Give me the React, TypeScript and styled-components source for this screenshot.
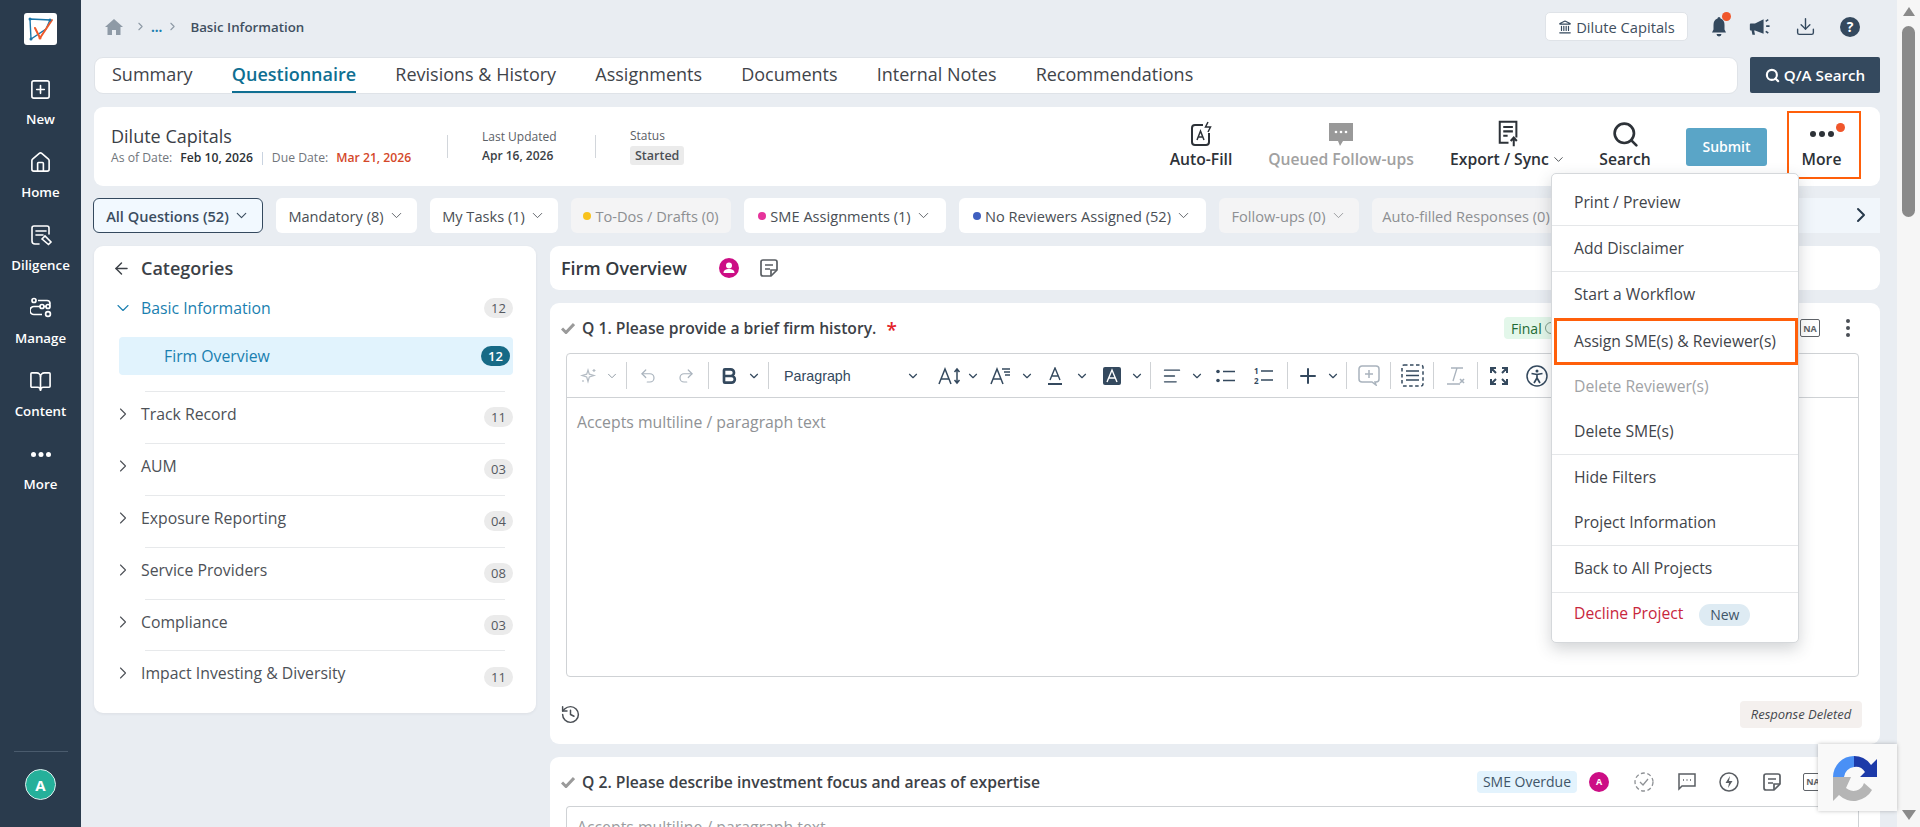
import React from "react";
import styled, { createGlobalStyle } from "styled-components";
import {
  SquarePlus, Home, BookOpen, ChevronRight, ChevronDown, ArrowLeft, Landmark, Download, Undo2, Redo2,
  Search as SearchIcon, History, Plus, AlignLeft, Bold,
} from "lucide-react";

const Global = createGlobalStyle`
  html, body { margin: 0; padding: 0; height: 100%; overflow: hidden; }
  body { font-family: "Open Sans", "Liberation Sans", sans-serif; color: #3a3f45; background: #e9edf2; }
  #root { height: 100%; }
  * { box-sizing: border-box; }
`;

const Page = styled.div`display: flex; width: 1920px; height: 827px; overflow: hidden; background: #e9edf2;`;

const Rail = styled.aside`
  width: 81px; flex: none; background: #2a3b4d; display: flex; flex-direction: column; align-items: center; padding-top: 13px;
`;
const LogoBox = styled.div`width: 33px; height: 32px; background: #fff; border-radius: 3px; display: flex; align-items: center; justify-content: center; margin-bottom: 23px;`;
const RailItem = styled.div`
  height: 73px; width: 100%; display: flex; flex-direction: column; align-items: center; justify-content: flex-start; padding-top: 9px; gap: 9px; color: #fff;
  font-size: 13.3px; font-weight: 600; line-height: 18px;
`;
const RailIcon = styled.div`height: 24px; display: flex; align-items: center; justify-content: center;`;
const RailFoot = styled.div`margin-top: auto; width: 100%; padding: 0 0 27px; display: flex; flex-direction: column; align-items: center;`;
const RailRule = styled.div`width: 54px; height: 1px; background: #4a5b6d; margin-bottom: 17px;`;
const RailAvatar = styled.div`
  width: 31px; height: 31px; border-radius: 50%; background: #25b09a; border: 1px solid #dfeeee; color: #fff; display: flex; align-items: center; justify-content: center; font-size: 15px; font-weight: 700;
`;

const Main = styled.main`flex: 1; min-width: 0; padding: 0 17px 0 13px; display: flex; flex-direction: column; overflow: hidden;`;
const Top = styled.div`height: 57px; display: flex; align-items: center; padding: 0 0 3px 0;`;
const Crumbs = styled.div`display: flex; align-items: center; font-size: 13.3px; font-weight: 600; color: #3f4f60; padding-left: 11px; margin-top: -1px;`;
const CrumbDots = styled.span`color: #1a7fb0; margin: 0 4px; font-weight: 700;`;
const CrumbLabel = styled.span`margin-left: 11px;`;
const TopRight = styled.div`margin-left: auto; display: flex; align-items: center; padding-right: 18px; margin-top: -1px;`;
const Firm = styled.div`
  height: 29px; width: 143px; background: #fff; border: 1px solid #dfe3e8; border-radius: 5px; display: flex; align-items: center; justify-content: center; gap: 4px;
  font-size: 14.7px; color: #3f4f60; font-weight: 400; margin-right: 19px; white-space: nowrap;
`;
const TopIcon = styled.div`position: relative; width: 24px; height: 24px; display: flex; align-items: center; justify-content: center;`;
const TopGap = styled.div<{ $w: number }>`width: ${(p) => p.$w}px;`;
const Dot = styled.span`position: absolute; top: -3px; right: 0; width: 9px; height: 9px; border-radius: 50%; background: #f0562b;`;
const MoreDot = styled(Dot)`top: 16px; right: 16px;`;

const TabRow = styled.div`display: flex; gap: 12px; height: 37px; margin-bottom: 13px;`;
const Tabs = styled.nav`
  flex: 1; background: #fff; border: 1px solid #dfe3e8; border-radius: 9px; display: flex; gap: 39.2px; padding-left: 17px; font-size: 18px; color: #3f444a;
`;
const Tab = styled.div<{ $on?: boolean }>`
  height: 100%; display: flex; align-items: center; padding-bottom: 1px; font-weight: ${(p) => (p.$on ? 600 : 400)}; color: ${(p) => (p.$on ? "#0f6f92" : "#3f444a")};
  border-bottom: ${(p) => (p.$on ? "2px solid #0f6f92" : "2px solid transparent")};
`;
const QaBtn = styled.button`
  width: 130px; height: 36px; background: #34495e; border: 0; border-radius: 2px; color: #fff; font: 600 15.2px "Open Sans", sans-serif; display: flex; align-items: center; justify-content: center; gap: 4px;
`;

const HeadCard = styled.section`
  height: 79px; background: #fff; border-radius: 9px; display: flex; align-items: center; padding: 0 19px 0 17px; margin-bottom: 12px;
`;
const Info = styled.div`width: 336px; display: flex; flex-direction: column;`;
const FirmName = styled.div`font-size: 18px; line-height: 24px; color: #3b4046; margin: -4px 0 2px;`;
const DateLine = styled.div`display: flex; align-items: center; font-size: 12.2px; line-height: 16px; color: #70757b;`;
const DateVal = styled.b<{ $red?: boolean }>`font-weight: 600; margin-left: 8px; color: ${(p) => (p.$red ? "#d4482a" : "#2c3136")};`;
const DateSep = styled.span`width: 1px; height: 13px; background: #c9d3e0; margin: 2px 9px 0;`;
const VSep = styled.div`width: 1px; height: 23px; background: #d2d6db; margin-right: 34px;`;
const Meta = styled.div`width: 113px; font-size: 12px; color: #5b6066; line-height: 16px;`;
const MetaVal = styled.div`font-weight: 600; color: #3a3f45; margin-top: 3px;`;
const StatusChip = styled.span`display: inline-block; margin-top: 2px; background: #ebebeb; border-radius: 3px; padding: 0 5px; font-weight: 600; font-size: 12.5px; color: #4b5056; line-height: 19px;`;
const Actions = styled.div`margin-left: auto; display: flex; align-items: center; height: 100%;`;
const Action = styled.div<{ $w: number; $off?: boolean; $nudge?: number }>`
  position: relative; width: ${(p) => p.$w}px; height: 100%; display: flex; flex-direction: column; align-items: center; justify-content: flex-start; padding: 14px ${(p) => p.$nudge ?? 0}px 0 0;
  font-size: 15.7px; line-height: 19px; font-weight: 600; color: ${(p) => (p.$off ? "#a1a1a1" : "#2d3238")}; white-space: nowrap;
`;
const ActIcon = styled.div`height: 26px; margin-bottom: 3px; display: flex; align-items: center; justify-content: center;`;
const Submit = styled.button`
  width: 81px; height: 38px; background: #5aa5c7; border: 0; border-radius: 3px; color: #fff; font: 600 14px "Open Sans", sans-serif; margin: 0 20px 0 21px;
`;
const MoreFrame = styled.div`
  position: absolute; top: 4px; left: 0; right: 0; bottom: 7px; border: 2px solid #ff5f0a;
`;
const ExportLabel = styled.div`display: flex; align-items: center; gap: 2px;`;

const FilterRow = styled.div`height: 35px; margin-left: -1px; display: flex; gap: 13px; margin-bottom: 13px; overflow: hidden; position: relative; background: linear-gradient(90deg, transparent 95%, #f1f6fb 95%);`;
const Pill = styled.div<{ $w: number; $active?: boolean; $off?: boolean }>`
  flex: none; width: ${(p) => p.$w}px; height: 35px; border-radius: 6px; display: flex; align-items: center; justify-content: center; gap: 4px; font-size: 14.6px; white-space: nowrap;
  background: ${(p) => (p.$active ? "#f2f9ff" : p.$off ? "#f4f4f5" : "#fff")};
  border: ${(p) => (p.$active ? "1px solid #34495e" : "0")};
  color: ${(p) => (p.$active ? "#3b4d5f" : p.$off ? "#8d8f92" : "#4a4f55")};
  font-weight: ${(p) => (p.$active ? 600 : 400)};
`;
const PillDot = styled.span<{ $c: string }>`width: 8px; height: 8px; border-radius: 50%; background: ${(p) => p.$c};`;
const FilterNext = styled.div`position: absolute; right: 7px; top: 5px; color: #27394b;`;

const Body = styled.div`flex: 1; min-height: 0; display: flex; gap: 14px;`;
const CatCard = styled.section`
  width: 442px; height: 467px; flex: none; background: #fff; border-radius: 9px; padding: 10px 23px 0 18px; box-shadow: 0 1px 3px rgba(60,70,80,.08);
`;
const CatTitle = styled.div`display: flex; align-items: center; gap: 10px; font-size: 18px; font-weight: 600; color: #3c4147; height: 24px; margin-bottom: 16px;`;
const CatHead = styled.div<{ $on?: boolean }>`
  display: flex; align-items: center; height: ${(p) => (p.$on ? "24px" : "50.9px")}; font-size: 15.8px; color: ${(p) => (p.$on ? "#1a7fb0" : "#4d5157")};
  padding-left: 1px;
  svg { flex: none; margin-bottom: ${(p) => (p.$on ? "0" : "7px")}; }
`;
const CatRule = styled.div`height: 1px; background: #e7e9eb; margin-left: 33px; margin-right: 8px;`;
const CatLabel = styled.span<{ $on?: boolean }>`margin-left: 8px; flex: 1; margin-bottom: ${(p) => (p.$on ? "0" : "7px")};`;
const Count = styled.span<{ $dark?: boolean }>`
  width: 29px; height: 20px; border-radius: 10px; display: flex; align-items: center; justify-content: center; font-size: 13px;
  background: ${(p) => (p.$dark ? "#166a86" : "#ebebeb")}; color: ${(p) => (p.$dark ? "#fff" : "#55595f")}; font-weight: ${(p) => (p.$dark ? 600 : 400)};
`;
const SubItem = styled.div`
  height: 38px; margin: 17px 0 16px 7px; padding: 0 3px 0 45px; background: #e1f3fd; border-radius: 4px; display: flex; align-items: center; justify-content: space-between; font-size: 15.8px; color: #1a7fb0;
`;

const Column = styled.div`flex: 1; min-width: 0; display: flex; flex-direction: column; gap: 13px;`;
const SecCard = styled.section`
  height: 44px; flex: none; background: #fff; border-radius: 9px; display: flex; align-items: center; padding-left: 11px; font-size: 18px; font-weight: 600; color: #343a40;
`;
const SecIcons = styled.div`display: flex; align-items: center; gap: 20px; margin-left: 32px;`;
const QCard = styled.article<{ $h: number }>`
  flex: none; height: ${(p) => p.$h}px; background: #fff; border-radius: 9px; padding: 0 21px 0 16px; display: flex; flex-direction: column;
`;
const QHead = styled.div<{ $h: number }>`flex: none; height: ${(p) => p.$h}px; margin-left: -5px; display: flex; align-items: center; font-size: 15.7px; font-weight: 600; color: #3c4147; white-space: nowrap;`;
const QTitle = styled.span`margin-left: 7px;`;
const Star = styled.span`color: #e3242b; font-size: 19px; margin-left: 10px; line-height: 14px; margin-top: 3px;`;
const QRight = styled.div`margin-left: auto; display: flex; align-items: center;`;
const FinalChip = styled.span`height: 22px; padding: 0 7px; gap: 3px; background: #e3f7ea; color: #1e6b35; border-radius: 4px; font-size: 14px; font-weight: 400; display: flex; align-items: center; width: 70px; margin-right: 226px;`;
const FinalRing = styled.i`width: 12px; height: 12px; flex: none; border-radius: 50%; border: 1px solid #7c9c88; display: block;`;
const OverChip = styled.span`height: 22px; width: 100px; background: #e3f3fd; color: #3f5568; border-radius: 4px; font-size: 14px; font-weight: 400; display: flex; align-items: center; justify-content: center; margin-right: 12px;`;
const MiniAvatar = styled.span`width: 20px; height: 20px; border-radius: 50%; background: #cc0e85; color: #fff; display: flex; align-items: center; justify-content: center; font-size: 9px; font-weight: 700; margin-right: 14px;`;
const QIconSlot = styled.span<{ $w: number }>`width: ${(p) => p.$w}px; display: flex; align-items: center; justify-content: center;`;
const NaBox = styled.span`width: 20px; height: 18px; border: 1.5px solid #5f6368; border-radius: 2px; color: #5f6368; font-size: 9px; font-weight: 700; display: flex; align-items: center; justify-content: center;`;
const Kebab = styled.span`display: flex; flex-direction: column; gap: 3px; margin: 0 9px 0 26px;`;
const KebabDot = styled.i`width: 4px; height: 4px; border-radius: 50%; background: #4a4f55; display: block;`;

const Editor = styled.div`height: 324px; flex: none; border: 1px solid #cfd2d5; border-radius: 4px; display: flex; flex-direction: column;`;
const EditorOpen = styled(Editor)`height: 80px; padding: 9px 10px; font-size: 15.8px; color: #9a9da0; border-bottom: 0;`;
const Toolbar = styled.div`height: 44px; flex: none; display: flex; align-items: center; padding-left: 8px; border-bottom: 1px solid #cfd2d5; color: #34495e;`;
const Tool = styled.div<{ $w: number; $off?: boolean }>`
  flex: none; width: ${(p) => p.$w}px; display: flex; align-items: center; justify-content: center; color: ${(p) => (p.$off ? "#a9b3bd" : "#34495e")};
  svg { flex: none; }
`;
const ToolSep = styled.div`flex: none; width: 1px; height: 27px; background: #cfd2d5;`;
const ParaSelect = styled.div`flex: none; width: 164px; padding: 0 13px 0 15px; display: flex; align-items: center; justify-content: space-between; font: 14.3px "Liberation Sans", sans-serif; color: #34495e;`;
const Placeholder = styled.div`padding: 13px 10px; font-size: 15.8px; line-height: 22px; color: #8f9295;`;
const QFoot = styled.div`flex: 1; display: flex; align-items: center; justify-content: space-between; padding: 7px 0 0 0; margin: 0 -3px 0 -6px;`;
const Deleted = styled.span`height: 27px; width: 122px; background: #f4f0ee; border-radius: 4px; font-size: 13px; font-style: italic; color: #44484d; display: flex; align-items: center; justify-content: center; white-space: nowrap;`;

const Menu = styled.div`
  position: absolute; left: 1551px; top: 173px; width: 248px; height: 470px; background: #fff; border: 1px solid #d5d8db; border-radius: 5px; box-shadow: 0 6px 16px rgba(50,60,70,.22); display: flex; flex-direction: column; z-index: 5;
`;
const MenuItem = styled.div<{ $h: number; $pt?: number; $pb?: number; $rule?: boolean; $off?: boolean; $red?: boolean; $hot?: boolean }>`
  flex: none; height: ${(p) => p.$h}px; display: flex; align-items: center; gap: 16px; font-size: 15.7px; white-space: nowrap;
  padding: ${(p) => p.$pt ?? 0}px 0 ${(p) => p.$pb ?? 2}px ${(p) => (p.$hot ? 20 : 22)}px;
  margin-left: ${(p) => (p.$hot ? 2 : 0)}px;
  color: ${(p) => (p.$red ? "#c8263c" : p.$off ? "#a1a3a6" : "#3f444a")};
  border-bottom: ${(p) => (p.$rule ? "1px solid #e5e7e9" : "0")};
  outline: ${(p) => (p.$hot ? "3px solid #ff5f0a" : "0")};
  outline-offset: -3px;
`;
const NewTag = styled.span`height: 22px; width: 51px; border-radius: 11px; background: #deebf3; color: #3f5568; font-size: 14px; display: flex; align-items: center; justify-content: center; margin-top: 3px;`;

const Scrollbar = styled.div`width: 23px; flex: none; background: #f6f6f6; display: flex; flex-direction: column; align-items: center; padding-top: 7px; position: relative; z-index: 6;`;
const ThumbUp = styled.div`width: 0; height: 0; border-left: 6px solid transparent; border-right: 6px solid transparent; border-bottom: 9px solid #8a8a8a;`;
const Thumb = styled.div`width: 13px; height: 191px; background: #8a8a8a; border-radius: 7px; margin-top: 10px;`;
const ThumbDown = styled.div`margin-top: auto; margin-bottom: 7px; width: 0; height: 0; border-left: 7px solid transparent; border-right: 7px solid transparent; border-top: 10px solid #8a8a8a;`;

const Recaptcha = styled.div`
  position: absolute; left: 1818px; top: 744px; width: 79px; height: 67px; background: #f9f9f9; box-shadow: 0 0 4px rgba(0,0,0,.25); display: flex; align-items: center; justify-content: center; z-index: 7; padding-right: 8px;
`;

const Chev = ({ s = 13, c = "currentColor", w = 1.6 }: { s?: number; c?: string; w?: number }) => <ChevronDown size={s} color={c} strokeWidth={w} />;

const Logo = () => (
  <svg width="28" height="28" viewBox="0 0 28 28" fill="none">
    <path d="M3 4 L23 5 L19 14 L4 24 Z" stroke="#1b75a8" strokeWidth="1.4" />
    <path d="M8 13 L13 23 L25 5" stroke="#ef5a2a" strokeWidth="2" strokeLinecap="round" strokeLinejoin="round" />
    <circle cx="3" cy="4" r="1.5" fill="#1b75a8" /><circle cx="23" cy="5" r="1.5" fill="#1b75a8" /><circle cx="4" cy="24" r="1.5" fill="#1b75a8" /><circle cx="13" cy="23" r="1.5" fill="#ef5a2a" />
  </svg>
);
const DiligenceIcon = () => (
  <svg width="24" height="24" viewBox="0 0 24 24" fill="none" stroke="#fff" strokeWidth="1.6" strokeLinecap="round">
    <path d="M10 21H6a3 3 0 0 1-3-3V5a2 2 0 0 1 2-2h13a2 2 0 0 1 2 2v6" />
    <path d="M7 8h10M7 12h7" /><path d="M13 16l3-3 6 6-2.5 2.5z" />
  </svg>
);
const ManageIcon = () => (
  <svg width="22" height="22" viewBox="0 0 22 22" fill="none" stroke="#fff" strokeWidth="1.7">
    <circle cx="4" cy="3.5" r="2" /><path d="M8 3.5h9a3 3 0 0 1 0 6H4a2.5 2.5 0 0 0 0 8h8" />
    <circle cx="12" cy="9.5" r="2" fill="#2a3b4d" /><circle cx="18" cy="9.5" r="2" fill="#2a3b4d" /><circle cx="18" cy="17" r="2.4" />
  </svg>
);
const DotsIcon = ({ c = "#fff", s = 5 }: { c?: string; s?: number }) => (
  <svg width={s * 4} height={s} viewBox="0 0 20 5"><circle cx="2.5" cy="2.5" r="2.5" fill={c} /><circle cx="10" cy="2.5" r="2.5" fill={c} /><circle cx="17.5" cy="2.5" r="2.5" fill={c} /></svg>
);
const HomeSolid = () => (
  <svg width="18" height="16" viewBox="0 0 18 16" fill="#8e9aa6"><path d="M9 0 0 8h2.5v8h4.5v-5h4v5h4.500V8H18z" /></svg>
);
const Bell = () => (
  <svg width="18" height="22" viewBox="0 0 18 22" fill="#34495e"><path d="M9 1a1.500 1.500 0 0 0-1.500 1.500C4.500 3.300 3.500 6 3.500 9v4.500L2 16.500h14l-1.500-3V9c0-3-1-5.700-4-6.500A1.500 1.500 0 0 0 9 1z" /><path d="M6.500 18h5a2.500 2.500 0 0 1-5 0z" /></svg>
);
const Megaphone = () => (
  <svg width="30" height="24" viewBox="0 0 28 22" fill="#34495e"><path d="M2 7h5l10-5v17L7 15H6l1 5H4l-1-5H2a1 1 0 0 1-1-1V8a1 1 0 0 1 1-1z" /><path d="M20 10h4M19.500 4.500l3-2M19.500 16l3 2" stroke="#34495e" strokeWidth="1.800" /></svg>
);
const HelpDisc = () => (
  <svg width="20" height="20" viewBox="0 0 20 20"><circle cx="10" cy="10" r="10" fill="#34495e" /><text x="10" y="15" textAnchor="middle" fontFamily="Open Sans" fontWeight="700" fontSize="14" fill="#fff">?</text></svg>
);
const AutoFillIcon = () => (
  <svg width="24" height="26" viewBox="0 0 24 26" fill="none" stroke="#2d3238" strokeWidth="2"><path d="M14 4H6a3 3 0 0 0-3 3v14a3 3 0 0 0 3 3h11a3 3 0 0 0 3-3V12" /><path d="M8 19l3.500-9 3.500 9M9.200 16h4.600" strokeWidth="1.500" /><path d="M19 1l-2.500 5h5L19 11" strokeWidth="1.500" /></svg>
);
const FollowIcon = () => (
  <svg width="26" height="26" viewBox="0 0 26 26"><path d="M1 2h24v18H15l-3 5-2-5H1z" fill="#999" /><circle cx="8" cy="11" r="1.300" fill="#fff" /><circle cx="13" cy="11" r="1.300" fill="#fff" /><circle cx="18" cy="11" r="1.300" fill="#fff" /></svg>
);
const ExportIcon = () => (
  <svg width="23" height="28" viewBox="0 0 26 32" fill="none" stroke="#2d3238" strokeWidth="2.300"><path d="M13 26H3V2h19v18" /><path d="M7 8h11M7 13h11M7 18h5" /><path d="M19 30v-9M15.500 24l3.500-4 3.500 4" /></svg>
);
const ActSearch = () => <SearchIcon size={29} color="#2d3238" strokeWidth={2.2} />;
const Note = ({ s = 20 }: { s?: number }) => (
  <svg width={s} height={s} viewBox="0 0 20 20" fill="none" stroke="#5a5e63" strokeWidth="1.700"><path d="M18 12V4a2 2 0 0 0-2-2H4a2 2 0 0 0-2 2v12a2 2 0 0 0 2 2h8z" /><path d="M6 7h8M6 11h5" /><path d="M12 18v-6h6" /></svg>
);
const UserDisc = () => (
  <svg width="20" height="20" viewBox="0 0 20 20"><circle cx="10" cy="10" r="10" fill="#cc0e85" /><circle cx="10" cy="7.500" r="3" fill="#fff" /><path d="M4.500 15c0-3 2.500-4 5.500-4s5.500 1 5.500 4z" fill="#fff" /></svg>
);
const Check = () => (
  <svg width="14" height="12" viewBox="0 0 14 12"><path d="M1 6.500 5 10.500 13 2" fill="none" stroke="#9a9a9a" strokeWidth="3" /></svg>
);
const Sparkle = () => (
  <svg width="17" height="17" viewBox="0 0 17 17" fill="none" stroke="#b4bcc4" strokeWidth="1.200"><path d="M8 3l1.300 4.200L14 8.500 9.300 10 8 14.500 6.700 10 2 8.500 6.700 7.200z" /><path d="M14 2v3M12.500 3.500h3M3 13v2" /></svg>
);
const TextSize = () => (
  <svg width="24" height="18" viewBox="0 0 24 18" fill="none" stroke="#34495e" strokeWidth="1.500"><path d="M1 17 7 2l6 15M3 12h8" /><path d="M19 2v14M16.500 5 19 2l2.500 3M16.500 13l2.500 3 2.500-3" /></svg>
);
const TextStyle = () => (
  <svg width="22" height="18" viewBox="0 0 22 18" fill="none" stroke="#34495e" strokeWidth="1.500"><path d="M1 17 7 2l6 15M3 12h8" /><path d="M12 2h8M14 5h6M15 8h5" /></svg>
);
const FontColor = () => (
  <svg width="18" height="18" viewBox="0 0 18 18" fill="none" stroke="#34495e" strokeWidth="1.400"><path d="M4 13 9 1l5 12M5.500 9h7" /><path d="M2 17h14" strokeWidth="2" /></svg>
);
const FontBg = () => (
  <svg width="18" height="18" viewBox="0 0 18 18"><rect width="18" height="18" rx="2" fill="#34495e" /><path d="M4 15 9 3l5 12M5.500 11h7" fill="none" stroke="#fff" strokeWidth="1.400" /></svg>
);
const Bullets = () => (
  <svg width="20" height="14" viewBox="0 0 20 14" stroke="#34495e" strokeWidth="1.500"><circle cx="2" cy="2.500" r="1.800" fill="#34495e" stroke="none" /><circle cx="2" cy="11.500" r="1.800" fill="#34495e" stroke="none" /><path d="M7 2.500h12M7 11.500h12" /></svg>
);
const Numbers = () => (
  <svg width="20" height="18" viewBox="0 0 20 18" stroke="#34495e" strokeWidth="1.500"><text x="0" y="7" fontSize="8" fontWeight="700" fill="#34495e" stroke="none" fontFamily="Open Sans">1</text><text x="0" y="17" fontSize="8" fontWeight="700" fill="#34495e" stroke="none" fontFamily="Open Sans">2</text><path d="M7 4h12M7 13h12" /></svg>
);
const CommentPlus = () => (
  <svg width="22" height="21" viewBox="0 0 22 21" fill="none" stroke="#a9b3bd" strokeWidth="1.500"><path d="M4 1h14a3 3 0 0 1 3 3v10a3 3 0 0 1-3 3h-1l1 3-4-3H4a3 3 0 0 1-3-3V4a3 3 0 0 1 3-3z" /><path d="M11 5v8M7 9h8" /></svg>
);
const SelectAll = () => (
  <svg width="23" height="23" viewBox="0 0 23 23" fill="none" stroke="#34495e" strokeWidth="1.500"><rect x="1" y="1" width="21" height="21" rx="2" strokeDasharray="3.500 2.500" /><path d="M5 7h13M5 11.500h13M5 16h13" /></svg>
);
const ClearFmt = () => (
  <svg width="20" height="20" viewBox="0 0 20 20" fill="none" stroke="#a9b3bd" strokeWidth="1.300"><path d="M5 2h12M11 2 7 15M1 18h13" /><path d="M14 13l4 4M18 13l-4 4" strokeWidth="1.600" /></svg>
);
const Expand = () => (
  <svg width="18" height="18" viewBox="0 0 18 18" fill="none" stroke="#34495e" strokeWidth="2"><path d="M1 6V1h5M12 1h5v5M17 12v5h-5M6 17H1v-5M1 1l5 5M17 1l-5 5M17 17l-5-5M1 17l5-5" /></svg>
);
const Access = () => (
  <svg width="22" height="22" viewBox="0 0 22 22" fill="none" stroke="#34495e" strokeWidth="1.500"><circle cx="11" cy="11" r="10" /><circle cx="11" cy="6" r="1.500" fill="#34495e" stroke="none" /><path d="M5.500 8.500 11 9.500l5.500-1M11 9.500V13M11 13l-3 5M11 13l3 5" strokeWidth="1.700" /></svg>
);
const DashCheck = () => (
  <svg width="20" height="20" viewBox="0 0 20 20" fill="none" stroke="#8e9195" strokeWidth="1.300"><circle cx="10" cy="10" r="9" strokeDasharray="4 2.500" /><path d="M6 10l3 3 5-6" /></svg>
);
const CommentDots = () => (
  <svg width="20" height="20" viewBox="0 0 20 20" fill="none" stroke="#5a5e63" strokeWidth="1.500"><path d="M2 2h16v12H5l-3 3z" /><path d="M6 8h1M9.500 8h1M13 8h1" /></svg>
);
const Bolt = () => (
  <svg width="20" height="20" viewBox="0 0 20 20"><circle cx="10" cy="10" r="9" fill="none" stroke="#5a5e63" strokeWidth="1.500" /><path d="M11 4 6.500 11H10l-1 5 4.500-7H10z" fill="#5a5e63" /></svg>
);
const CaptchaLogo = () => (
  <svg width="46" height="46" viewBox="0 0 46 46" fill="none">
    <path d="M2 22A21 21 0 0 1 23 1V12A11 11 0 0 0 13 22z" fill="#4a90f5" />
    <path d="M23 1A21 21 0 0 1 40 10L46 4V22H29L34 17A11 11 0 0 0 23 12z" fill="#1c3aa9" />
    <path d="M2 22V46L8 40A21 21 0 0 0 41 35L33 28A11 11 0 0 1 15 33L20 22z" fill="#b5b5b5" />
  </svg>
);

const railItems = [
  { label: "New", icon: <SquarePlus size={23} color="#fff" strokeWidth={1.7} /> },
  { label: "Home", icon: <Home size={23} color="#fff" strokeWidth={1.7} /> },
  { label: "Diligence", icon: <DiligenceIcon /> },
  { label: "Manage", icon: <ManageIcon /> },
  { label: "Content", icon: <BookOpen size={23} color="#fff" strokeWidth={1.7} /> },
  { label: "More", icon: <DotsIcon /> },
];
const tabs = ["Summary", "Questionnaire", "Revisions & History", "Assignments", "Documents", "Internal Notes", "Recommendations"];
const cats: [string, string][] = [
  ["Track Record", "11"], ["AUM", "03"], ["Exposure Reporting", "04"], ["Service Providers", "08"], ["Compliance", "03"], ["Impact Investing & Diversity", "11"],
];
const menu = [
  { t: "Print / Preview", h: 52, pt: 6, rule: true },
  { t: "Add Disclaimer", h: 46, rule: true },
  { t: "Start a Workflow", h: 46 },
  { t: "Assign SME(s) & Reviewer(s)", h: 47, hot: true },
  { t: "Delete Reviewer(s)", h: 44, off: true },
  { t: "Delete SME(s)", h: 46, rule: true },
  { t: "Hide Filters", h: 45 },
  { t: "Project Information", h: 46, rule: true },
  { t: "Back to All Projects", h: 47, rule: true },
];
const tc = <Chev s={14} w={2} />;

export default function App() {
  return (
    <Page>
      <Global />
      <Rail>
        <LogoBox><Logo /></LogoBox>
        {railItems.map((r) => (
          <RailItem key={r.label}><RailIcon>{r.icon}</RailIcon>{r.label}</RailItem>
        ))}
        <RailFoot><RailRule /><RailAvatar>A</RailAvatar></RailFoot>
      </Rail>
      <Main>
        <Top>
          <Crumbs>
            <HomeSolid /><TopGap $w={11} /><ChevronRight size={13} color="#8e9aa6" /><CrumbDots>...</CrumbDots><ChevronRight size={13} color="#8e9aa6" /><CrumbLabel>Basic Information</CrumbLabel>
          </Crumbs>
          <TopRight>
            <Firm><Landmark size={14} color="#34495e" />Dilute Capitals</Firm>
            <TopIcon><Bell /><Dot /></TopIcon><TopGap $w={18} />
            <TopIcon><Megaphone /></TopIcon><TopGap $w={20} />
            <TopIcon><Download size={21} color="#34495e" strokeWidth={1.6} /></TopIcon><TopGap $w={21} />
            <TopIcon><HelpDisc /></TopIcon>
          </TopRight>
        </Top>
        <TabRow>
          <Tabs>{tabs.map((t) => <Tab key={t} $on={t === "Questionnaire"}>{t}</Tab>)}</Tabs>
          <QaBtn><SearchIcon size={15} color="#fff" strokeWidth={3.4} />Q/A Search</QaBtn>
        </TabRow>
        <HeadCard>
          <Info>
            <FirmName>Dilute Capitals</FirmName>
            <DateLine>As of Date:<DateVal>Feb 10, 2026</DateVal><DateSep />Due Date:<DateVal $red>Mar 21, 2026</DateVal></DateLine>
          </Info>
          <VSep />
          <Meta>Last Updated<MetaVal>Apr 16, 2026</MetaVal></Meta>
          <VSep />
          <Meta>Status<div><StatusChip>Started</StatusChip></div></Meta>
          <Actions>
            <Action $w={100}><ActIcon><AutoFillIcon /></ActIcon>Auto-Fill</Action>
            <Action $w={180} $off><ActIcon><FollowIcon /></ActIcon>Queued Follow-ups</Action>
            <Action $w={154}><ActIcon><ExportIcon /></ActIcon><ExportLabel>Export / Sync <Chev s={15} w={1.3} /></ExportLabel></Action>
            <Action $w={80}><ActIcon><ActSearch /></ActIcon>Search</Action>
            <Submit>Submit</Submit>
            <Action $w={74} $nudge={5}><ActIcon><DotsIcon c="#2d3238" s={6} /></ActIcon>More<MoreDot /><MoreFrame /></Action>
          </Actions>
        </HeadCard>
        <FilterRow>
          <Pill $w={170} $active>All Questions (52) <Chev s={17} /></Pill>
          <Pill $w={141}>Mandatory (8) <Chev s={17} w={1.2} /></Pill>
          <Pill $w={128}>My Tasks (1) <Chev s={17} w={1.2} /></Pill>
          <Pill $w={160} $off><PillDot $c="#f8c21c" />To-Dos / Drafts (0)</Pill>
          <Pill $w={202}><PillDot $c="#e6339b" />SME Assignments (1) <Chev s={17} w={1.2} /></Pill>
          <Pill $w={247}><PillDot $c="#3f5fc0" />No Reviewers Assigned (52) <Chev s={17} w={1.2} /></Pill>
          <Pill $w={140} $off>Follow-ups (0) <Chev s={17} w={1.2} /></Pill>
          <Pill $w={188} $off>Auto-filled Responses (0)</Pill>
          <FilterNext><ChevronRight size={24} strokeWidth={2} /></FilterNext>
        </FilterRow>
        <Body>
          <CatCard>
            <CatTitle><ArrowLeft size={19} color="#3c4147" strokeWidth={1.8} />Categories</CatTitle>
            <CatHead $on><Chev s={20} w={1.3} /><CatLabel $on>Basic Information</CatLabel><Count>12</Count></CatHead>
            <SubItem>Firm Overview<Count $dark>12</Count></SubItem>
            {cats.map(([n, c]) => (
              <React.Fragment key={n}>
                <CatRule />
                <CatHead><ChevronRight size={20} strokeWidth={1.3} /><CatLabel>{n}</CatLabel><Count>{c}</Count></CatHead>
              </React.Fragment>
            ))}
          </CatCard>
          <Column>
            <SecCard>Firm Overview<SecIcons><UserDisc /><Note /></SecIcons></SecCard>
            <QCard $h={441}>
              <QHead $h={50}>
                <Check /><QTitle>Q 1. Please provide a brief firm history.</QTitle><Star>*</Star>
                <QRight><FinalChip>Final<FinalRing /></FinalChip><NaBox>NA</NaBox><Kebab><KebabDot /><KebabDot /><KebabDot /></Kebab></QRight>
              </QHead>
              <Editor>
                <Toolbar>
                  <Tool $w={26} $off><Sparkle /></Tool><Tool $w={22} $off><Chev s={14} c="#8a959f" /></Tool><Tool $w={3} /><ToolSep />
                  <Tool $w={42} $off><Undo2 size={18} strokeWidth={1.6} /></Tool><Tool $w={34} $off><Redo2 size={18} strokeWidth={1.6} /></Tool><Tool $w={5} /><ToolSep />
                  <Tool $w={40}><Bold size={20} strokeWidth={3.2} /></Tool><Tool $w={10}>{tc}</Tool><Tool $w={9} /><ToolSep />
                  <ParaSelect>Paragraph{tc}</ParaSelect>
                  <Tool $w={34}><TextSize /></Tool><Tool $w={12}>{tc}</Tool>
                  <Tool $w={44}><TextStyle /></Tool><Tool $w={8}>{tc}</Tool>
                  <Tool $w={48}><FontColor /></Tool><Tool $w={6}>{tc}</Tool><Tool $w={5} />
                  <Tool $w={44}><FontBg /></Tool><Tool $w={6}>{tc}</Tool><Tool $w={10} /><ToolSep />
                  <Tool $w={42}><AlignLeft size={20} strokeWidth={1.6} /></Tool><Tool $w={8}>{tc}</Tool>
                  <Tool $w={50}><Bullets /></Tool><Tool $w={26}><Numbers /></Tool><Tool $w={10} /><ToolSep />
                  <Tool $w={40}><Plus size={24} strokeWidth={2} /></Tool><Tool $w={10}>{tc}</Tool><Tool $w={8} /><ToolSep />
                  <Tool $w={43} $off><CommentPlus /></Tool><ToolSep />
                  <Tool $w={42}><SelectAll /></Tool><ToolSep />
                  <Tool $w={43} $off><ClearFmt /></Tool><ToolSep />
                  <Tool $w={42}><Expand /></Tool>
                  <Tool $w={34}><Access /></Tool>
                </Toolbar>
                <Placeholder>Accepts multiline / paragraph text</Placeholder>
              </Editor>
              <QFoot><History size={21} color="#4a4f55" strokeWidth={1.7} /><Deleted>Response Deleted</Deleted></QFoot>
            </QCard>
            <QCard $h={120}>
              <QHead $h={49}>
                <Check /><QTitle>Q 2. Please describe investment focus and areas of expertise</QTitle>
                <QRight>
                  <OverChip>SME Overdue</OverChip><MiniAvatar>A</MiniAvatar>
                  <QIconSlot $w={42}><DashCheck /></QIconSlot><QIconSlot $w={43}><CommentDots /></QIconSlot><QIconSlot $w={42}><Bolt /></QIconSlot><QIconSlot $w={43}><Note /></QIconSlot>
                  <QIconSlot $w={40}><NaBox>NA</NaBox></QIconSlot><QIconSlot $w={26} />
                </QRight>
              </QHead>
              <EditorOpen>Accepts multiline / paragraph text</EditorOpen>
            </QCard>
          </Column>
        </Body>
      </Main>
      <Scrollbar><ThumbUp /><Thumb /><ThumbDown /></Scrollbar>
      <Menu>
        {menu.map((m) => (
          <MenuItem key={m.t} $h={m.h} $pt={m.pt} $rule={m.rule} $off={m.off} $hot={m.hot}>{m.t}</MenuItem>
        ))}
        <MenuItem $h={48} $pb={8} $red>Decline Project<NewTag>New</NewTag></MenuItem>
      </Menu>
      <Recaptcha><CaptchaLogo /></Recaptcha>
    </Page>
  );
}
